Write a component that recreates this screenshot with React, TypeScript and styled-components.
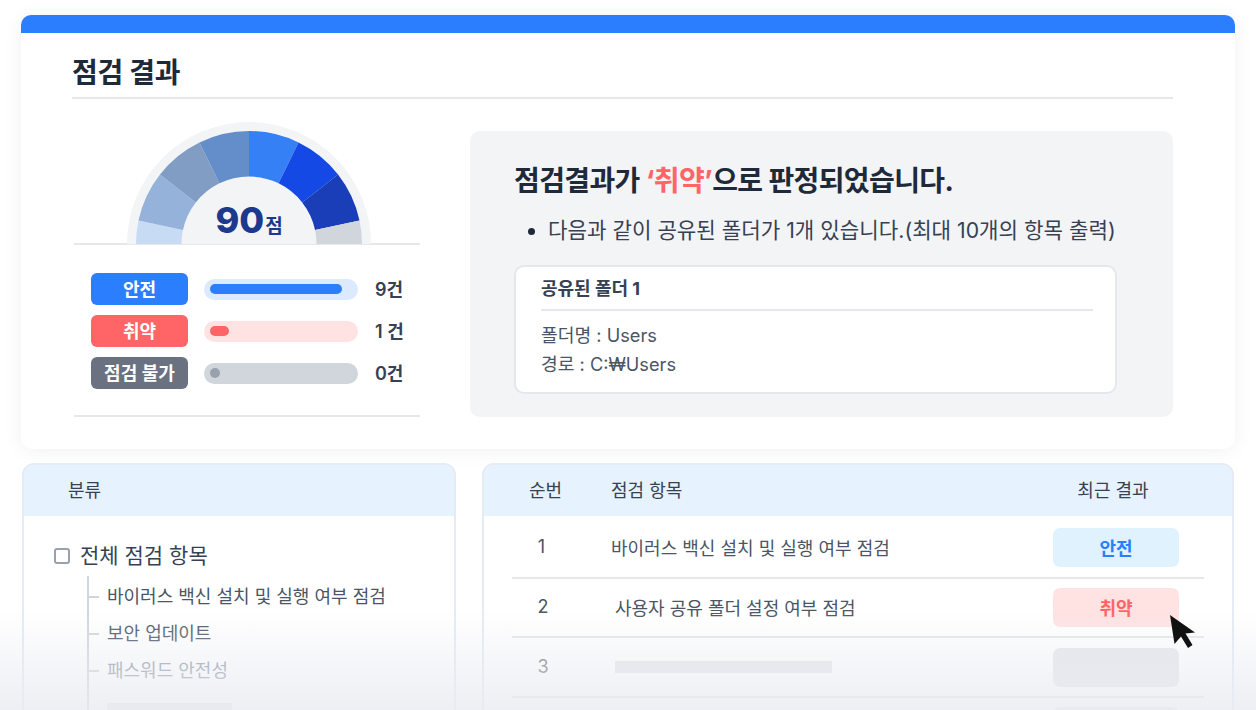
import React from "react";
import styled, { createGlobalStyle } from "styled-components";

const Global = createGlobalStyle`
  html, body { margin: 0; padding: 0; background: #fff; height: 710px; overflow: hidden; }
  * { box-sizing: border-box; }
  body { font-family: Inter, "Noto Sans CJK KR", "Noto Sans", sans-serif; color: #1f2937; }
`;

const Page = styled.div`
  position: relative;
  width: 1256px;
  height: 710px;
  overflow: hidden;
  padding: 15px 21px 0 21px;
  background: #fff;
`;

const ResultCard = styled.section`
  height: 434px;
  border-radius: 10px 10px 12px 12px;
  background: #fff;
  box-shadow: 0 2px 20px rgba(17, 24, 39, 0.06);
  overflow: hidden;
`;

const TopBar = styled.div`
  height: 18px;
  background: #2b7fff;
`;

const CardBody = styled.div`
  padding: 0 62px 0 51px;
`;

const Title = styled.h1`
  margin: 0;
  height: 66px;
  padding-top: 21px;
  border-bottom: 2px solid #e5e7eb;
  font-size: 28px;
  line-height: 38px;
  font-weight: 700;
  letter-spacing: -0.3px;
  color: #1e2939;
`;

const ResultRow = styled.div`
  display: flex;
  margin-top: 23px;
`;

const ScoreColumn = styled.div`
  width: 346px;
  margin-left: 2px;
  margin-right: 50px;
  flex: none;
`;

const GaugeWrap = styled.div`
  position: relative;
  height: 123px;
  padding-left: 4px;
  border-bottom: 2px solid #e5e7eb;
  display: flex;
  justify-content: center;
`;

const GaugeSvg = styled.svg`
  display: block;
  width: 246px;
  height: 122px;
`;

const ScoreText = styled.div`
  position: absolute;
  left: 4px;
  right: 0;
  bottom: 1px;
  display: flex;
  justify-content: center;
  align-items: baseline;
  color: #1c398e;
`;

const ScoreNum = styled.span`
  font-size: 36px;
  line-height: 44px;
  font-weight: 800;
`;

const ScoreUnit = styled.span`
  font-size: 19px;
  font-weight: 700;
  margin-left: 1px;
`;

const Legend = styled.div`
  display: flex;
  flex-direction: column;
  gap: 10px;
  padding: 28px 0 26px 17px;
  border-bottom: 2px solid #e5e7eb;
`;

const LegendRow = styled.div`
  display: flex;
  align-items: center;
  height: 32px;
`;

const LegendBadge = styled.div<{ $bg: string }>`
  width: 97px;
  height: 32px;
  padding-bottom: 2px;
  border-radius: 6px;
  background: ${(p) => p.$bg};
  color: #fff;
  font-size: 18px;
  font-weight: 600;
  display: flex;
  align-items: center;
  justify-content: center;
`;

const Track = styled.div<{ $bg: string }>`
  width: 154px;
  height: 21px;
  margin-left: 16px;
  padding: 5px 6px;
  border-radius: 11px;
  background: ${(p) => p.$bg};
`;

const Fill = styled.div<{ $bg: string }>`
  height: 10px;
  border-radius: 5px;
  background: ${(p) => p.$bg};
`;

const Count = styled.div`
  margin-left: 17px;
  padding-bottom: 2px;
  font-size: 18px;
  font-weight: 600;
  color: #364153;
  white-space: pre;
`;

const Panel = styled.div`
  width: 703px;
  height: 286px;
  margin-top: 9px;
  padding: 31px 44px 0;
  border-radius: 10px;
  background: #f3f4f6;
`;

const Heading = styled.h2`
  margin: 0;
  font-size: 28px;
  line-height: 38px;
  font-weight: 700;
  letter-spacing: -0.62px;
  color: #1e2939;
  white-space: nowrap;
`;

const Danger = styled.span`
  color: #ff6467;
`;

const BulletLine = styled.ul`
  margin: 15px 0 0;
  padding: 0 0 0 34px;
  font-size: 21.2px;
  line-height: 30px;
  color: #364153;
  white-space: nowrap;
  li::marker { font-size: 21px; color: #1e2939; }
`;

const FolderBox = styled.div`
  width: 603px;
  height: 129px;
  margin-top: 20px;
  padding: 0 22px 0 25px;
  border: 2px solid #e5e7eb;
  border-radius: 10px;
  background: #fff;
`;

const FolderTitle = styled.div`
  height: 44px;
  border-bottom: 2px solid #e5e7eb;
  font-size: 18px;
  font-weight: 700;
  line-height: 44px;
  color: #364153;
`;

const FolderLines = styled.div`
  padding: 10px 0 0 0;
  font-size: 18.2px;
  line-height: 29px;
  color: #4a5565;
`;

const BottomGrid = styled.div`
  display: grid;
  grid-template-columns: 434px 752px;
  gap: 26px;
  margin-top: 14px;
  padding-left: 1px;
`;

const TablePanel = styled.div`
  height: 320px;
  border: 2px solid #e4ebf5;
  border-radius: 12px;
  background: #fff;
  overflow: hidden;
`;

const CategoryHead = styled.div`
  height: 51px;
  padding-left: 44px;
  background: #e6f2fd;
  font-size: 18px;
  line-height: 51px;
  color: #364153;
`;

const TreeBody = styled.div`
  padding: 22px 0 0 30px;
`;

const TreeRoot = styled.div`
  display: flex;
  align-items: center;
  gap: 10px;
  font-size: 21px;
  line-height: 36px;
  color: #364153;
`;

const Checkbox = styled.span`
  width: 16px;
  height: 16px;
  border: 2px solid #99a1af;
  border-radius: 3px;
  background: #fff;
`;

const TreeList = styled.div`
  margin: 2px 0 0 33px;
  padding: 2px 0 0;
  border-left: 2px solid #d1d5dc;
`;

const TreeItem = styled.div<{ $muted?: boolean }>`
  position: relative;
  height: 36.8px;
  padding-left: 18px;
  font-size: 18px;
  line-height: 37px;
  color: ${(p) => (p.$muted ? "#8f98a8" : "#4a5565")};
  &::before {
    content: "";
    position: absolute;
    left: 0;
    top: 18px;
    width: 10px;
    height: 2px;
    background: #d1d5dc;
  }
`;

const TreeSkeleton = styled.div`
  width: 125px;
  height: 24px;
  margin-top: 15px;
  background: #e5e7eb;
`;

const TableHead = styled.div`
  display: grid;
  grid-template-columns: 127px 442px 126px;
  height: 51px;
  margin-bottom: 3px;
  background: #e6f2fd;
  font-size: 18px;
  line-height: 51px;
  color: #364153;
`;

const HeadCenter = styled.div`
  padding-right: 4px;
  text-align: center;
`;

const HeadItem = styled.div``;

const HeadWide = styled.div`
  padding-right: 6px;
  text-align: center;
  white-space: nowrap;
`;

const TableRow = styled.div`
  display: grid;
  grid-template-columns: 99px 442px 126px 26px;
  align-items: center;
  height: 59.7px;
  margin: 0 28px;
  border-bottom: 2px solid #e5e7eb;
`;

const RowNum = styled.div<{ $muted?: boolean; $shift?: number }>`
  padding-right: ${(p) => p.$shift ?? 40}px;
  padding-bottom: 2px;
  text-align: center;
  font-size: 18px;
  color: ${(p) => (p.$muted ? "#6a7282" : "#4a5565")};
`;

const RowName = styled.div<{ $nudge?: boolean }>`
  padding-left: ${(p) => (p.$nudge ? 4 : 0)}px;
  padding-bottom: 2px;
  font-size: 18px;
  color: #4a5565;
  white-space: nowrap;
`;

const NameSkeleton = styled.div`
  width: 217px;
  height: 12px;
  margin-left: 4px;
  background: #e5e7eb;
`;

const ResultBadge = styled.div<{ $bg: string; $fg: string }>`
  height: 39px;
  padding-bottom: 2px;
  border-radius: 7px;
  background: ${(p) => p.$bg};
  color: ${(p) => p.$fg};
  font-size: 18px;
  font-weight: 600;
  display: flex;
  align-items: center;
  justify-content: center;
`;

const Fade = styled.div`
  position: absolute;
  left: 0;
  right: 0;
  bottom: 0;
  height: 100px;
  background: linear-gradient(to bottom, rgba(233, 235, 241, 0), rgba(233, 235, 241, 0.8));
  pointer-events: none;
`;

const Pointer = styled.svg`
  position: absolute;
  left: 1168px;
  top: 613px;
  width: 30px;
  height: 38px;
`;

function polar(r: number, deg: number) {
  const a = (deg * Math.PI) / 180;
  return [123 + r * Math.sin(a), 122 - r * Math.cos(a)];
}

function seg(from: number, to: number) {
  const [x1, y1] = polar(113, from);
  const [x2, y2] = polar(113, to);
  const [x3, y3] = polar(67.5, to);
  const [x4, y4] = polar(67.5, from);
  return `M${x1} ${y1}A113 113 0 0 1 ${x2} ${y2}L${x3} ${y3}A67.5 67.5 0 0 0 ${x4} ${y4}Z`;
}

const SEGMENTS: [number, number, string][] = [
  [-90, -78, "#c8dbf5"],
  [-78, -52, "#95b2da"],
  [-52, -26, "#819dc3"],
  [-26, 0, "#648ec9"],
  [0, 26, "#3580f5"],
  [26, 52, "#1549e6"],
  [52, 78, "#1a3db8"],
  [78, 90, "#d1d5dc"],
];

export default function App() {
  return (
    <Page>
      <Global />
      <ResultCard>
        <TopBar />
        <CardBody>
          <Title>점검 결과</Title>
          <ResultRow>
            <ScoreColumn>
              <GaugeWrap>
                <GaugeSvg viewBox="0 0 246 122">
                  <path d="M1 122A122 122 0 0 1 245 122Z" fill="#f3f4f6" />
                  {SEGMENTS.map(([a, b, c]) => (
                    <path key={a} d={seg(a, b)} fill={c} />
                  ))}
                </GaugeSvg>
                <ScoreText>
                  <ScoreNum>90</ScoreNum>
                  <ScoreUnit>점</ScoreUnit>
                </ScoreText>
              </GaugeWrap>
              <Legend>
                <LegendRow>
                  <LegendBadge $bg="#2b7fff">안전</LegendBadge>
                  <Track $bg="#dbeafe"><Fill $bg="#2b7fff" style={{ width: 132 }} /></Track>
                  <Count>9건</Count>
                </LegendRow>
                <LegendRow>
                  <LegendBadge $bg="#ff6467">취약</LegendBadge>
                  <Track $bg="#ffe2e2"><Fill $bg="#ff6467" style={{ width: 19 }} /></Track>
                  <Count>1 건</Count>
                </LegendRow>
                <LegendRow>
                  <LegendBadge $bg="#6a7282">점검 불가</LegendBadge>
                  <Track $bg="#d1d5dc"><Fill $bg="#99a1af" style={{ width: 10 }} /></Track>
                  <Count>0건</Count>
                </LegendRow>
              </Legend>
            </ScoreColumn>
            <Panel>
              <Heading>
                점검결과가 <Danger>‘취약’</Danger>으로 판정되었습니다.
              </Heading>
              <BulletLine>
                <li>다음과 같이 공유된 폴더가 1개 있습니다.(최대 10개의 항목 출력)</li>
              </BulletLine>
              <FolderBox>
                <FolderTitle>공유된 폴더 1</FolderTitle>
                <FolderLines>
                  <div>폴더명 : Users</div>
                  <div>경로 : C:₩Users</div>
                </FolderLines>
              </FolderBox>
            </Panel>
          </ResultRow>
        </CardBody>
      </ResultCard>
      <BottomGrid>
        <TablePanel>
          <CategoryHead>분류</CategoryHead>
          <TreeBody>
            <TreeRoot>
              <Checkbox />
              전체 점검 항목
            </TreeRoot>
            <TreeList>
              <TreeItem>바이러스 백신 설치 및 실행 여부 점검</TreeItem>
              <TreeItem>보안 업데이트</TreeItem>
              <TreeItem $muted>패스워드 안전성</TreeItem>
              <TreeItem><TreeSkeleton /></TreeItem>
            </TreeList>
          </TreeBody>
        </TablePanel>
        <TablePanel>
          <TableHead>
            <HeadCenter>순번</HeadCenter>
            <HeadItem>점검 항목</HeadItem>
            <HeadWide>최근 결과</HeadWide>
          </TableHead>
          <TableRow>
            <RowNum>1</RowNum>
            <RowName>바이러스 백신 설치 및 실행 여부 점검</RowName>
            <ResultBadge $bg="#dff2fe" $fg="#2b7fff">안전</ResultBadge>
          </TableRow>
          <TableRow>
            <RowNum $shift={37}>2</RowNum>
            <RowName $nudge>사용자 공유 폴더 설정 여부 점검</RowName>
            <ResultBadge $bg="#ffe2e2" $fg="#ff6467">취약</ResultBadge>
          </TableRow>
          <TableRow>
            <RowNum $muted $shift={37}>3</RowNum>
            <NameSkeleton />
            <ResultBadge $bg="#e5e7eb" $fg="#e5e7eb" />
          </TableRow>
          <TableRow>
            <RowNum $muted />
            <NameSkeleton />
            <ResultBadge $bg="#e5e7eb" $fg="#e5e7eb" />
          </TableRow>
        </TablePanel>
      </BottomGrid>
      <Fade />
      <Pointer viewBox="0 0 30 38">
        <path d="M2 2 L27 19.5 L17.5 20.5 L24.5 32 L20 35 L13 23.5 L6.5 31 Z" fill="#111" />
      </Pointer>
    </Page>
  );
}
